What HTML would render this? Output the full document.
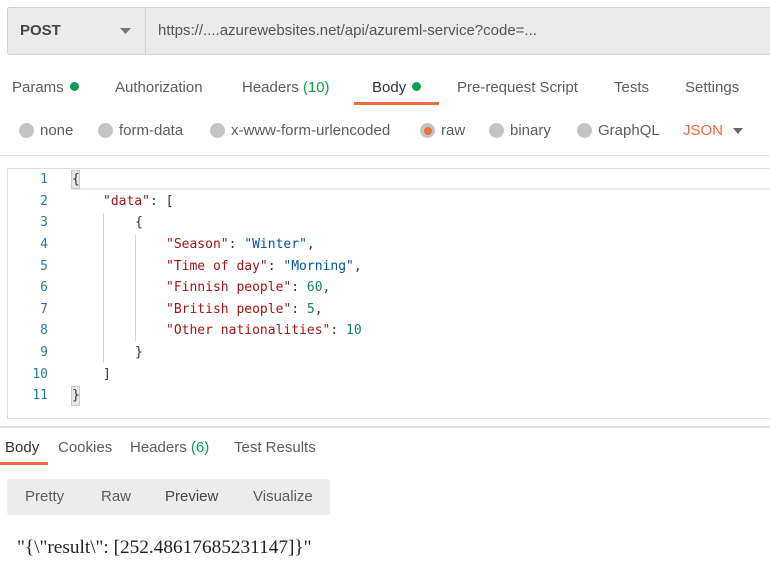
<!DOCTYPE html>
<html><head><style>
*{margin:0;padding:0;box-sizing:border-box}
body{width:770px;height:570px;background:#fff;font-family:"Liberation Sans",sans-serif;font-size:15px;color:#5c5c5c;position:relative;overflow:hidden}
.a{position:absolute;white-space:nowrap}
.dot{display:inline-block;width:9px;height:9px;border-radius:50%;background:#0c9f4f;margin-left:6px;vertical-align:1px}
.rad{position:absolute;width:15px;height:15px;border-radius:50%;background:#c4c4c4}
.code{font-family:"DejaVu Sans Mono",monospace;font-size:13px}
.ln{position:absolute;left:8px;width:40px;text-align:right;color:#2a7a9a;font-family:"DejaVu Sans Mono",monospace;font-size:13px}
.k{color:#a31515}.s{color:#0451a5}.n{color:#098658}.p{color:#333}
</style></head><body>
<div class="a" style="left:7px;top:7px;width:770px;height:48px;background:#ebebeb;border:1px solid #d4d4d4;border-radius:3px"></div>
<div class="a" style="left:145px;top:8px;width:1px;height:46px;background:#d4d4d4"></div>
<div class="a" style="left:20px;top:22px;font-weight:bold;color:#444;font-size:15px">POST</div>
<svg class="a" style="left:120px;top:28px" width="12" height="7"><path d="M0 0H11L5.5 6Z" fill="#777"/></svg>
<div class="a" style="left:158px;top:22px;color:#555">https://....azurewebsites.net/api/azureml-service?code=...</div>

<div class="a" style="left:12px;top:79px">Params<span class="dot"></span></div>
<div class="a" style="left:115px;top:79px">Authorization</div>
<div class="a" style="left:242px;top:79px">Headers <span style="color:#0c9f4f">(10)</span></div>
<div class="a" style="left:372px;top:79px;color:#333">Body<span class="dot"></span></div>
<div class="a" style="left:354px;top:102px;width:85px;height:3px;background:#f26b3a"></div>
<div class="a" style="left:457px;top:79px">Pre-request Script</div>
<div class="a" style="left:614px;top:79px">Tests</div>
<div class="a" style="left:685px;top:79px">Settings</div>

<div class="rad" style="left:19px;top:123px"></div><div class="a" style="left:40px;top:122px">none</div>
<div class="rad" style="left:98px;top:123px"></div><div class="a" style="left:119px;top:122px">form-data</div>
<div class="rad" style="left:210px;top:123px"></div><div class="a" style="left:231px;top:122px">x-www-form-urlencoded</div>
<div class="rad" style="left:420px;top:123px;background:#c4c4c4"><div style="margin:3.5px;width:8px;height:8px;border-radius:50%;background:#f26b3a"></div></div><div class="a" style="left:441px;top:122px">raw</div>
<div class="rad" style="left:489px;top:123px"></div><div class="a" style="left:510px;top:122px">binary</div>
<div class="rad" style="left:577px;top:123px"></div><div class="a" style="left:598px;top:122px">GraphQL</div>
<div class="a" style="left:683px;top:122px;color:#f26b3a">JSON</div>
<svg class="a" style="left:733px;top:128px" width="11" height="7"><path d="M0 0H10L5 6Z" fill="#666"/></svg>
<div class="a" style="left:0;top:155px;width:770px;height:1px;background:#e4e4e4"></div>

<div class="a" style="left:7px;top:168px;width:770px;height:251px;border:1px solid #dcdcdc"></div>
<div class="a" style="left:71px;top:169px;width:700px;height:21px;border-bottom:2px solid #ececec"></div>
<div class="a" style="left:71px;top:170px;width:9px;height:19px;background:#e3e8e3;border:1px solid #c8c8c8"></div>
<div class="a" style="left:71px;top:386px;width:9px;height:20px;background:#e3e8e3;border:1px solid #c8c8c8"></div>
<div class="a" style="left:103px;top:213px;width:1px;height:150px;background:#d8d8d8"></div>
<div class="a" style="left:135px;top:235px;width:1px;height:106px;background:#d8d8d8"></div>
<div class="ln" style="top:172px">1</div><div class="ln" style="top:194px">2</div><div class="ln" style="top:215px">3</div><div class="ln" style="top:237px">4</div><div class="ln" style="top:259px">5</div><div class="ln" style="top:280px">6</div><div class="ln" style="top:302px">7</div><div class="ln" style="top:323px">8</div><div class="ln" style="top:345px">9</div><div class="ln" style="top:367px">10</div><div class="ln" style="top:388px">11</div>
<div class="a code p" style="left:72px;top:172px">{</div>
<div class="a code p" style="left:103px;top:194px"><span class="k">"data"</span>: [</div>
<div class="a code p" style="left:135px;top:215px">{</div>
<div class="a code p" style="left:166px;top:237px"><span class="k">"Season"</span>: <span class="s">"Winter"</span>,</div>
<div class="a code p" style="left:166px;top:259px"><span class="k">"Time of day"</span>: <span class="s">"Morning"</span>,</div>
<div class="a code p" style="left:166px;top:280px"><span class="k">"Finnish people"</span>: <span class="n">60</span>,</div>
<div class="a code p" style="left:166px;top:302px"><span class="k">"British people"</span>: <span class="n">5</span>,</div>
<div class="a code p" style="left:166px;top:323px"><span class="k">"Other nationalities"</span>: <span class="n">10</span></div>
<div class="a code p" style="left:135px;top:345px">}</div>
<div class="a code p" style="left:103px;top:367px">]</div>
<div class="a code p" style="left:72px;top:388px">}</div>

<div class="a" style="left:0;top:426px;width:770px;height:2px;background:#e2e2e2"></div>
<div class="a" style="left:5px;top:439px;color:#333">Body</div>
<div class="a" style="left:0;top:462px;width:48px;height:3px;background:#f26b3a"></div>
<div class="a" style="left:58px;top:439px">Cookies</div>
<div class="a" style="left:130px;top:439px">Headers <span style="color:#0c9f4f">(6)</span></div>
<div class="a" style="left:234px;top:439px">Test Results</div>
<div class="a" style="left:7px;top:479px;width:323px;height:36px;background:#ececec;border-radius:3px"></div>
<div class="a" style="left:25px;top:488px">Pretty</div>
<div class="a" style="left:101px;top:488px">Raw</div>
<div class="a" style="left:165px;top:488px;color:#444">Preview</div>
<div class="a" style="left:253px;top:488px">Visualize</div>
<div class="a" style="left:17px;top:537px;font-family:'Liberation Serif',serif;font-size:19.3px;color:#222">"{\"result\": [252.48617685231147]}"</div>
</body></html>
